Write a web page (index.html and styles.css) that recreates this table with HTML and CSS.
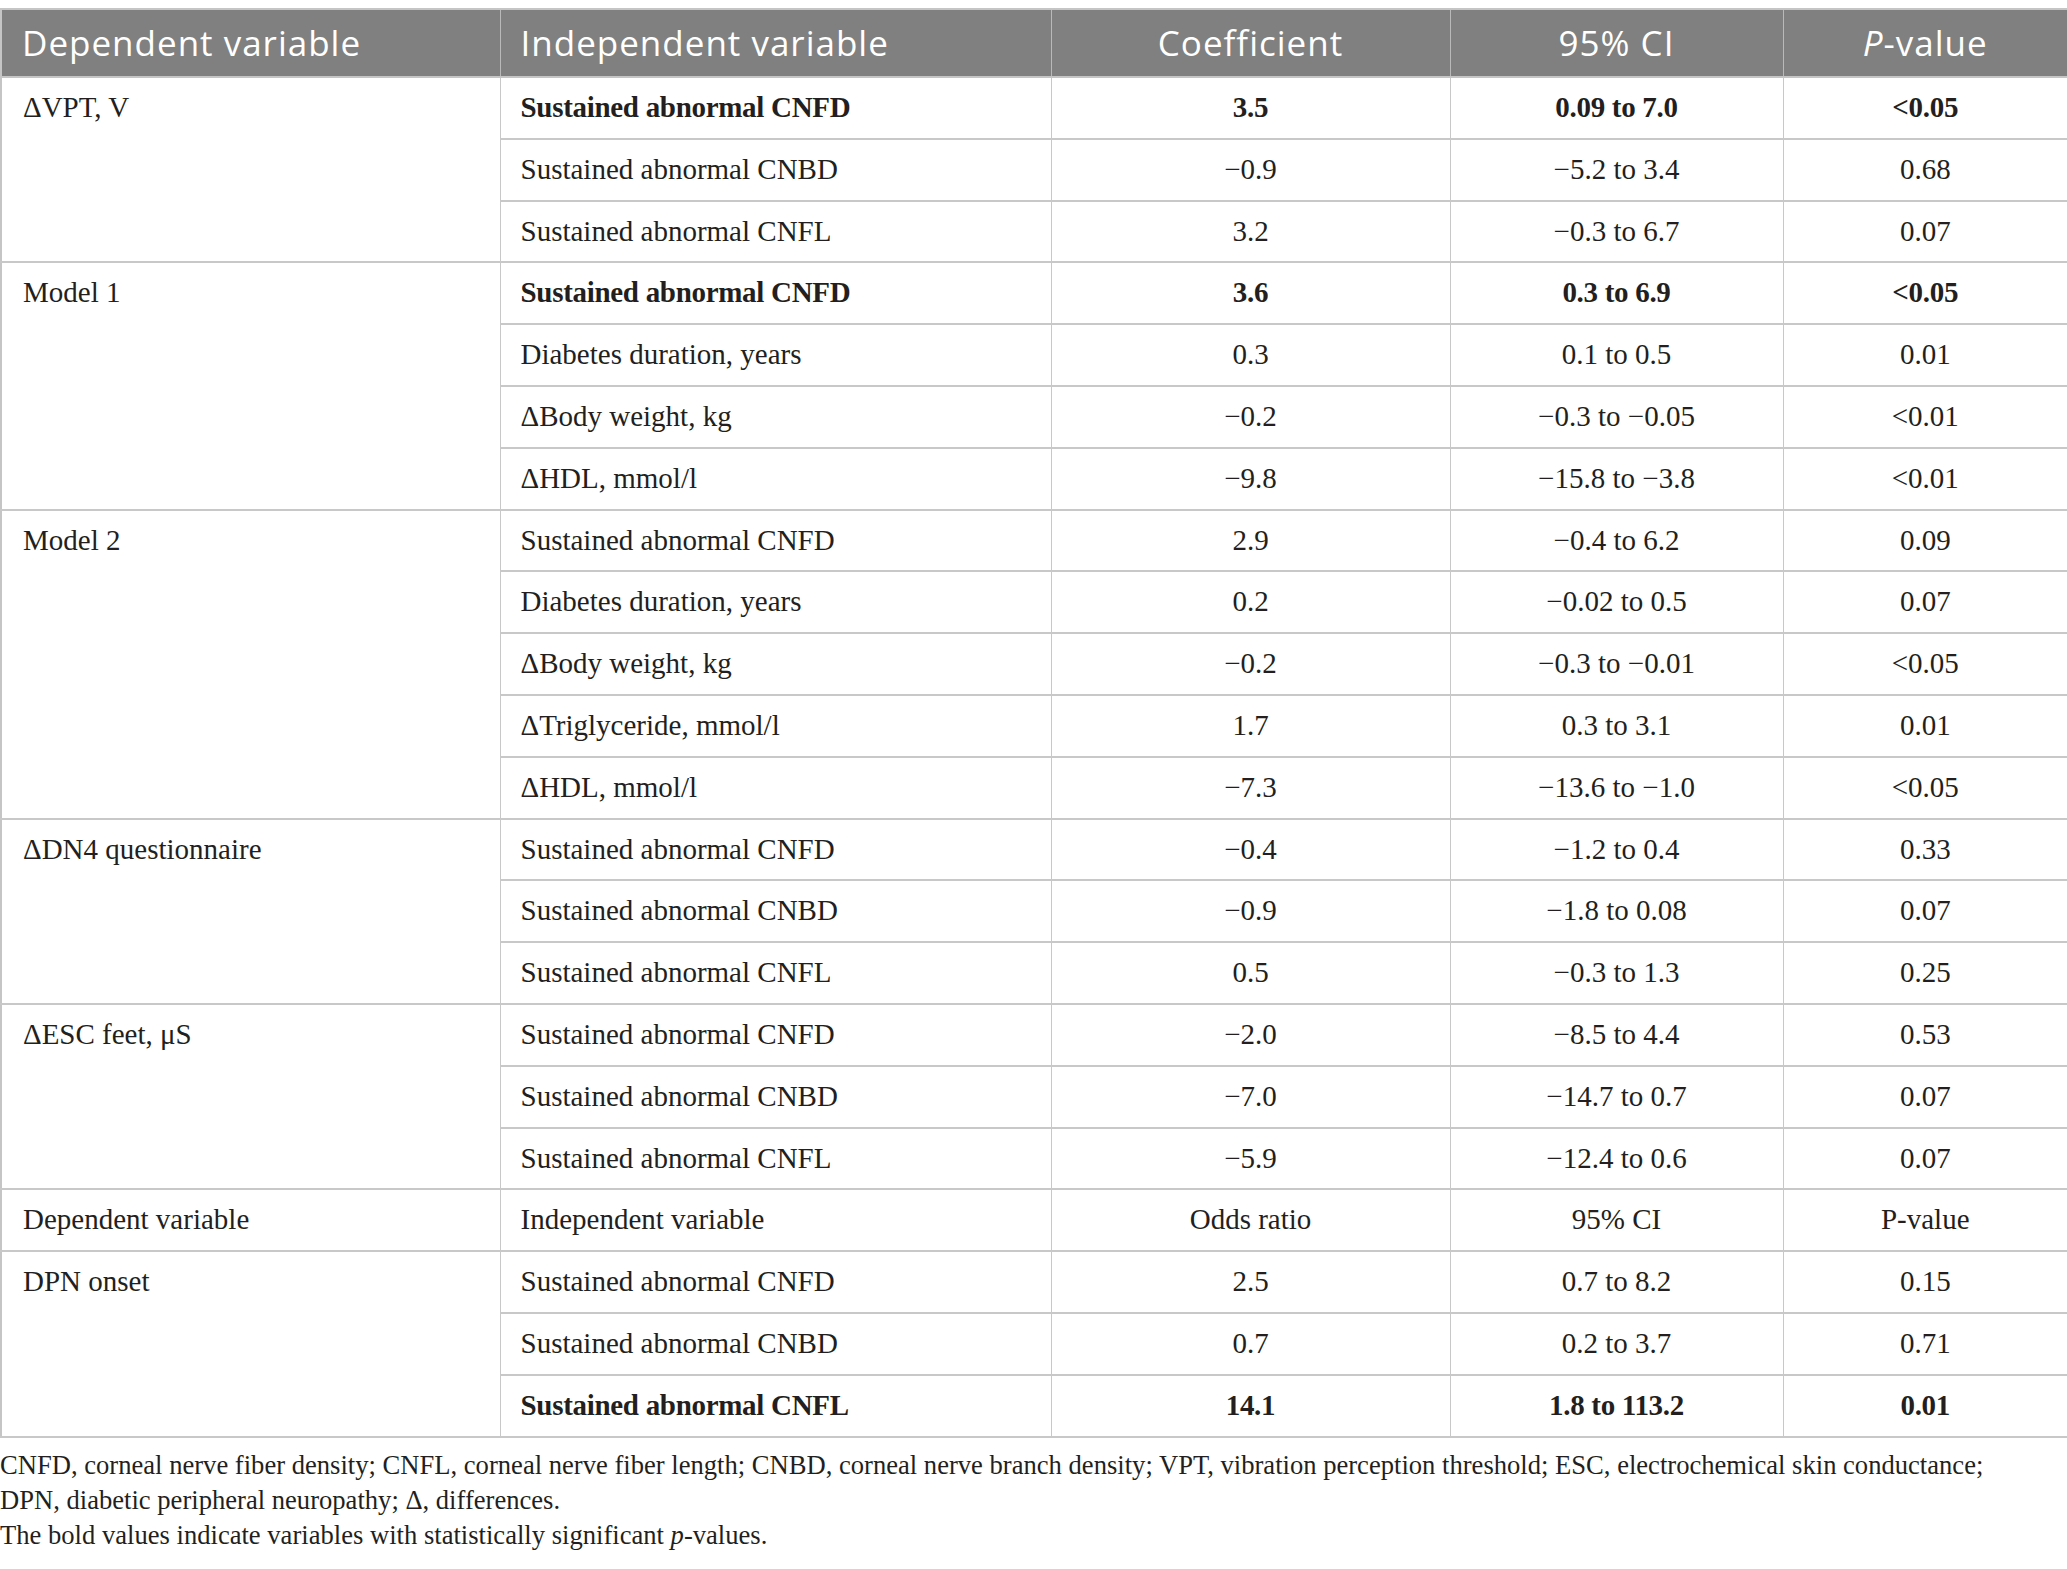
FILE: index.html
```html
<!DOCTYPE html>
<html lang="en">
<head>
  <meta charset="UTF-8">
  <title>Regression table</title>
  <link rel="stylesheet" href="styles.css">
</head>
<body>
  <table class="results">
    <colgroup>
      <col class="c-dep">
      <col class="c-ind">
      <col class="c-coef">
      <col class="c-ci">
      <col class="c-p">
    </colgroup>
    <thead>
      <tr>
        <th class="left">Dependent variable</th>
        <th class="left">Independent variable</th>
        <th>Coefficient</th>
        <th>95% CI</th>
        <th><i>P</i>-value</th>
      </tr>
    </thead>
    <tbody>
      <tr class="sig">
        <td class="group" rowspan="3">ΔVPT, V</td>
        <td class="left">Sustained abnormal CNFD</td><td>3.5</td><td>0.09 to 7.0</td><td>&lt;0.05</td>
      </tr>
      <tr><td class="left">Sustained abnormal CNBD</td><td>−0.9</td><td>−5.2 to 3.4</td><td>0.68</td></tr>
      <tr><td class="left">Sustained abnormal CNFL</td><td>3.2</td><td>−0.3 to 6.7</td><td>0.07</td></tr>

      <tr class="sig">
        <td class="group" rowspan="4">Model 1</td>
        <td class="left">Sustained abnormal CNFD</td><td>3.6</td><td>0.3 to 6.9</td><td>&lt;0.05</td>
      </tr>
      <tr><td class="left">Diabetes duration, years</td><td>0.3</td><td>0.1 to 0.5</td><td>0.01</td></tr>
      <tr><td class="left">ΔBody weight, kg</td><td>−0.2</td><td>−0.3 to −0.05</td><td>&lt;0.01</td></tr>
      <tr><td class="left">ΔHDL, mmol/l</td><td>−9.8</td><td>−15.8 to −3.8</td><td>&lt;0.01</td></tr>

      <tr>
        <td class="group" rowspan="5">Model 2</td>
        <td class="left">Sustained abnormal CNFD</td><td>2.9</td><td>−0.4 to 6.2</td><td>0.09</td>
      </tr>
      <tr><td class="left">Diabetes duration, years</td><td>0.2</td><td>−0.02 to 0.5</td><td>0.07</td></tr>
      <tr><td class="left">ΔBody weight, kg</td><td>−0.2</td><td>−0.3 to −0.01</td><td>&lt;0.05</td></tr>
      <tr><td class="left">ΔTriglyceride, mmol/l</td><td>1.7</td><td>0.3 to 3.1</td><td>0.01</td></tr>
      <tr><td class="left">ΔHDL, mmol/l</td><td>−7.3</td><td>−13.6 to −1.0</td><td>&lt;0.05</td></tr>

      <tr>
        <td class="group" rowspan="3">ΔDN4 questionnaire</td>
        <td class="left">Sustained abnormal CNFD</td><td>−0.4</td><td>−1.2 to 0.4</td><td>0.33</td>
      </tr>
      <tr><td class="left">Sustained abnormal CNBD</td><td>−0.9</td><td>−1.8 to 0.08</td><td>0.07</td></tr>
      <tr><td class="left">Sustained abnormal CNFL</td><td>0.5</td><td>−0.3 to 1.3</td><td>0.25</td></tr>

      <tr>
        <td class="group" rowspan="3">ΔESC feet, μS</td>
        <td class="left">Sustained abnormal CNFD</td><td>−2.0</td><td>−8.5 to 4.4</td><td>0.53</td>
      </tr>
      <tr><td class="left">Sustained abnormal CNBD</td><td>−7.0</td><td>−14.7 to 0.7</td><td>0.07</td></tr>
      <tr><td class="left">Sustained abnormal CNFL</td><td>−5.9</td><td>−12.4 to 0.6</td><td>0.07</td></tr>

      <tr>
        <td class="group">Dependent variable</td>
        <td class="left">Independent variable</td><td>Odds ratio</td><td>95% CI</td><td>P-value</td>
      </tr>

      <tr>
        <td class="group" rowspan="3">DPN onset</td>
        <td class="left">Sustained abnormal CNFD</td><td>2.5</td><td>0.7 to 8.2</td><td>0.15</td>
      </tr>
      <tr><td class="left">Sustained abnormal CNBD</td><td>0.7</td><td>0.2 to 3.7</td><td>0.71</td></tr>
      <tr class="sig"><td class="left">Sustained abnormal CNFL</td><td>14.1</td><td>1.8 to 113.2</td><td>0.01</td></tr>
    </tbody>
  </table>

  <p class="note">
    CNFD, corneal nerve fiber density; CNFL, corneal nerve fiber length; CNBD, corneal nerve branch density; VPT, vibration perception threshold; ESC, electrochemical skin conductance;<br>
    DPN, diabetic peripheral neuropathy; Δ, differences.<br>
    The bold values indicate variables with statistically significant <i>p</i>-values.
  </p>
</body>
</html>
```

FILE: styles.css
```css
body {
  margin: 0;
  padding-top: 8px;
  background: #fff;
  color: #231f20;
  font-family: "Liberation Serif", serif;
}

.results {
  width: 2067px;
  border-collapse: collapse;
  table-layout: fixed;
  border: 2px solid #c5c5c5;
}

.c-dep { width: 499px; }
.c-ind { width: 551px; }
.c-coef { width: 399px; }
.c-ci { width: 333px; }
.c-p { width: 285px; }

.results th {
  background-color: #7f807f;
  color: #fff;
  font-family: "Open Sans", sans-serif;
  font-weight: 400;
  font-size: 35px;
  letter-spacing: 1px;
  line-height: 66px;
  padding: 0 20px;
  text-align: center;
  border: 1px solid #b9b9b9;
  border-bottom: 2px solid #c5c5c5;
}

.results td {
  font-size: 29px;
  line-height: 59.8px;
  padding: 0 20px;
  text-align: center;
  white-space: nowrap;
  border-top: 2px solid #c8c8c8;
  border-bottom: 2px solid #c8c8c8;
  border-left: 1px solid #c8c8c8;
  border-right: 1px solid #c8c8c8;
}

.results th.left,
.results td.left {
  text-align: left;
}

.results td.group {
  text-align: left;
  vertical-align: top;
  padding-left: 21px;
}

.results tr.sig td:not(.group) {
  font-weight: bold;
  letter-spacing: -0.3px;
}

.note {
  margin: 10px 0 0;
  font-size: 26.6px;
  line-height: 35px;
}
```
